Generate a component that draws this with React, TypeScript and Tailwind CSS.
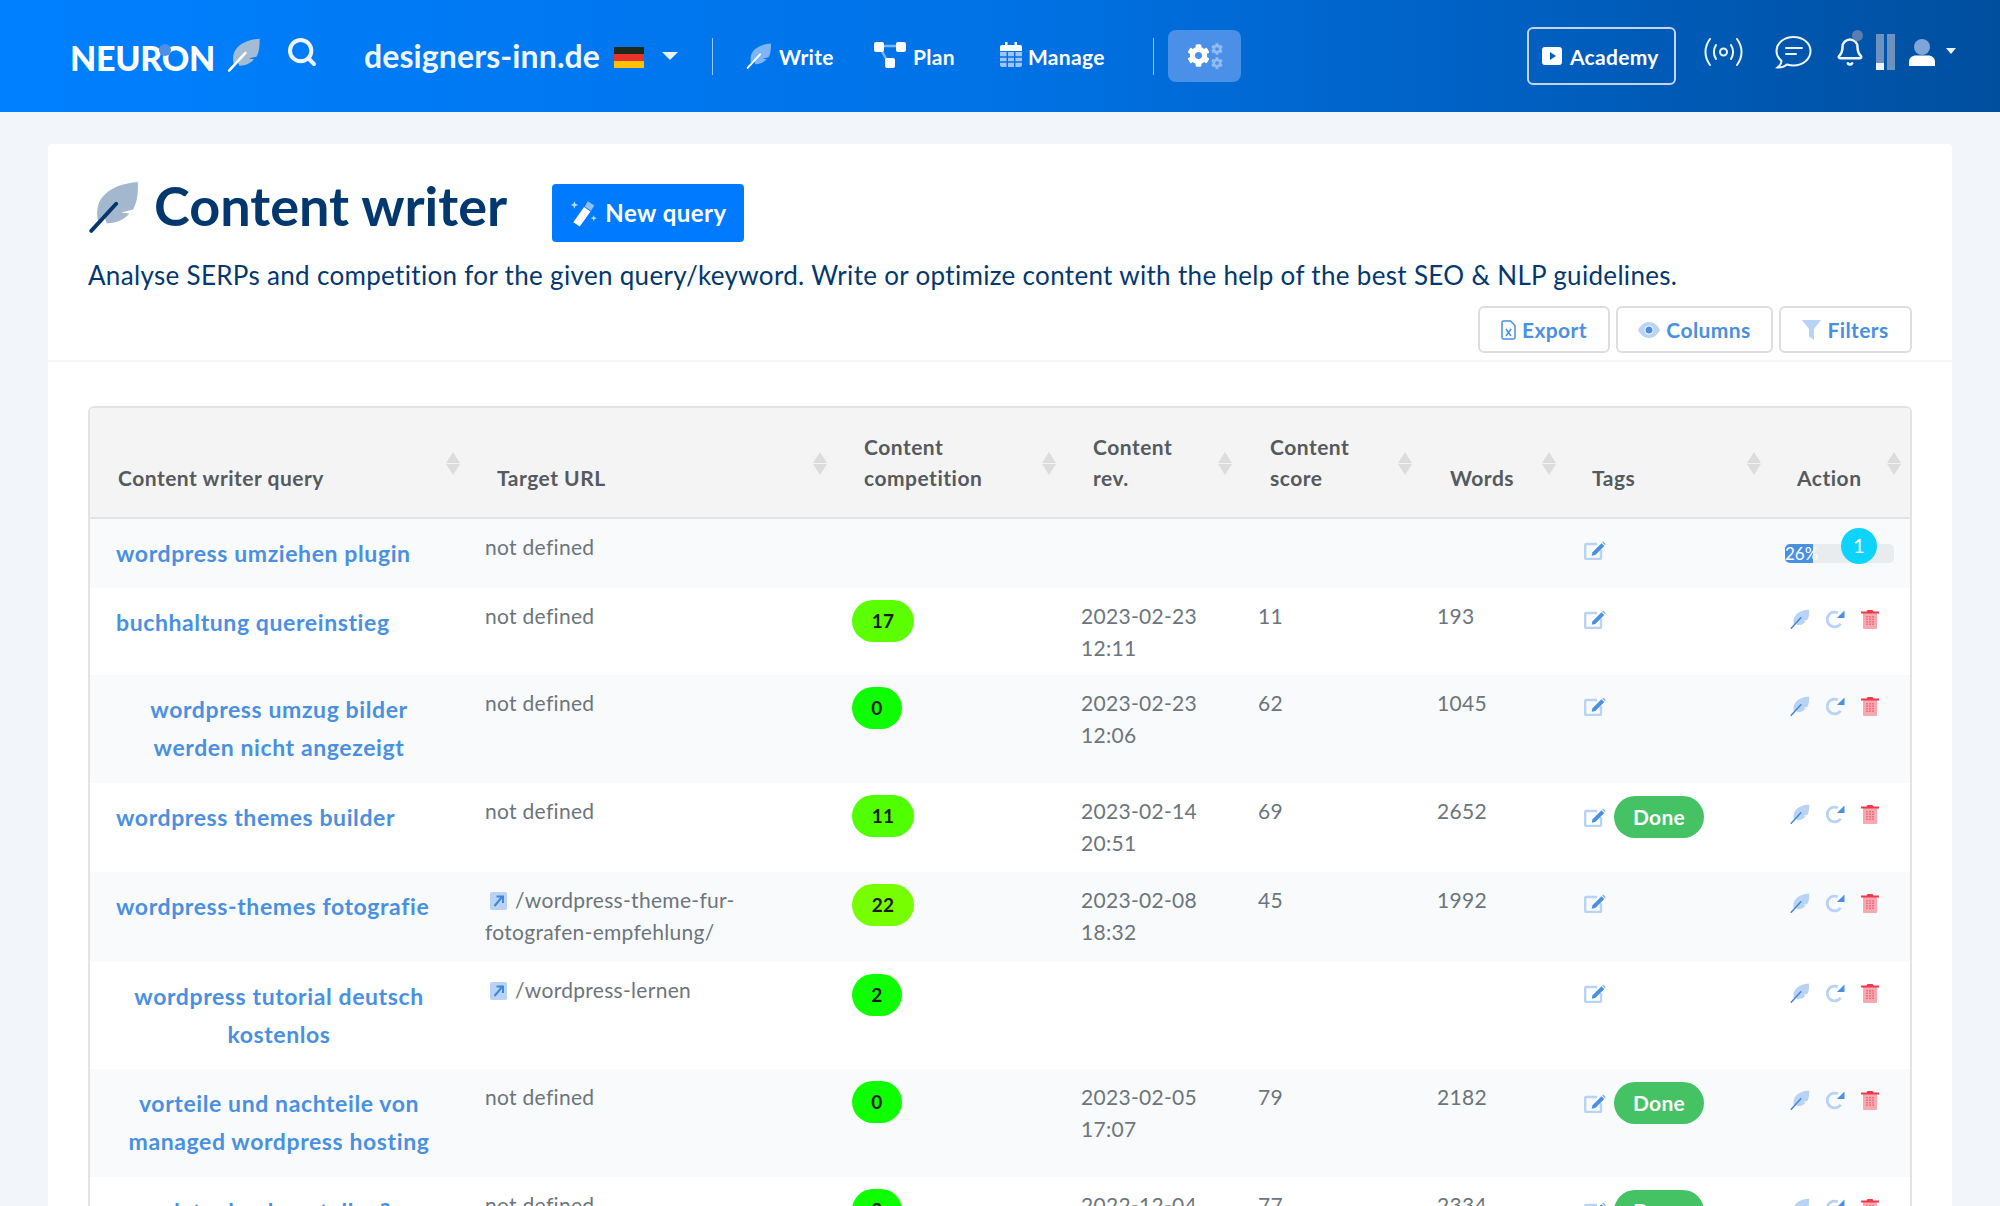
import React from 'react';
import { Search, Bell } from 'lucide-react';
import { FaCog } from 'react-icons/fa';

const FeatherIcon = ({ leaf, line, className }: { leaf: string; line: string; className: string }) => (
  <svg viewBox="0 0 24 24" className={className}>
    <path fill={leaf} d="M23.500.5C14 1 6 5 4.500 12c-.5 2.500-.3 5 .3 7l3-1.800.8 2.300c4 .2 8-1.500 10.500-4.500l-3.800-.5 5.500-1.300c1.700-3 2.500-7 2.200-13.200z" />
    <path stroke={line} strokeWidth="1.800" strokeLinecap="round" fill="none" d="M1.500 23 13 10.500" />
  </svg>
);

const EditIcon = () => (
  <svg viewBox="0 0 22 19" className="w-[22px] h-[19px] shrink-0">
    <path fill="none" stroke="#b9d3f5" strokeWidth="2.400" d="M13 3H2.200a1 1 0 0 0-1 1v13a1 1 0 0 0 1 1H16a1 1 0 0 0 1-1V9" />
    <path fill="#4a90e2" d="M17.500 2.200l2.800 2.800-9 9-3.600.8.8-3.600z" />
    <path fill="#7fb2ee" d="M18.500 1.200c.5-.5 1-.5 1.500 0l1.300 1.300c.4.5.4 1 0 1.500l-.3.3-2.800-2.800z" />
  </svg>
);

const RefreshIcon = () => (
  <svg viewBox="0 0 20 20" className="w-[19px] h-[20px] shrink-0">
    <path fill="none" stroke="#b9d3f5" strokeWidth="3" d="M15.500 15A7.800 7.800 0 1 1 12.500 3.500" />
    <path fill="#4a90e2" d="M19.500 1v8H11.500z" />
  </svg>
);

const TrashIcon = () => (
  <svg viewBox="0 0 18 20" className="w-[18px] h-[20px] shrink-0">
    <path fill="#f7a8b0" d="M2 4h14v15a1 1 0 0 1-1 1H3a1 1 0 0 1-1-1z" />
    <path fill="#ee3a4c" d="M0 2.500h5.500L6.500 1h5l1 1.500H18V4.500H0z" />
    <path stroke="#ee3a4c" strokeWidth="1" strokeDasharray="1.500 1" d="M6 7v10M9 7v10M12 7v10" />
  </svg>
);

const LinkIcon = () => (
  <svg viewBox="0 0 17 18" className="w-[17px] h-[18px] inline-block align-[-2px] mr-[8px] ml-[5px]">
    <rect width="17" height="18" rx="2" fill="#b9d3f5" />
    <path d="M4.500 14 12 5M6.500 4.500H13V11" fill="none" stroke="#3f86dc" strokeWidth="2" />
  </svg>
);

const SortArrows = ({ right }: { right: string }) => (
  <span className={`absolute top-[44px] flex flex-col gap-[1px] ${right}`}>
    <span className="w-0 h-0 border-x-[7px] border-x-transparent border-b-[11px] border-b-[#dcdcdc]" />
    <span className="w-0 h-0 border-x-[7px] border-x-transparent border-t-[11px] border-t-[#dcdcdc]" />
  </span>
);

const Separator = ({ ml }: { ml: string }) => <div className={`w-[1px] h-[37px] bg-white/60 ${ml}`} />;

const NavText = ({ w, children }: { w: string; children: React.ReactNode }) => (
  <span className={`${w} whitespace-nowrap text-[21px] leading-none font-bold text-white tracking-[0.3px]`}>{children}</span>
);

const Header = () => (
  <header className="h-[112px] bg-linear-to-r from-[#0080ff] via-[#0072e6] to-[#004f9f] flex items-center pl-[70px]">
    <div className="relative w-[147px] text-[34px] leading-none font-black text-white tracking-[-0.3px] mt-[3px]">
      NEURON
      <span className="absolute left-[89px] top-[3px] w-[12px] h-[12px] rounded-full bg-[#4a90e8]" />
    </div>
    <FeatherIcon leaf="#a3bcd6" line="#ffffff" className="w-[34px] h-[36px] ml-[10px] -mt-[2px]" />
    <Search size={32} strokeWidth={3} className="text-[#eef5fd] ml-[25px] -mt-[9px]" />
    <span className="w-[239px] whitespace-nowrap ml-[46px] text-[32px] leading-none font-bold text-[#eef5fd] tracking-[0.1px]">designers-inn.de</span>
    <svg viewBox="0 0 30 21" className="w-[30px] h-[21px] ml-[11px] mt-[3px]">
      <rect width="30" height="7" fill="#1f2a1a" />
      <rect y="7" width="30" height="7" fill="#e8332d" />
      <rect y="14" width="30" height="7" fill="#ffc107" />
    </svg>
    <span className="ml-[18px] -mt-[1px] w-0 h-0 border-x-[8px] border-x-transparent border-t-[8px] border-t-[#e8f1fb]" />
    <Separator ml="ml-[34px]" />
    <FeatherIcon leaf="#7db5f7" line="#ffffff" className="w-[26px] h-[32px] ml-[33px] -mt-[1px]" />
    <span className="ml-[7px] flex"><NavText w="w-[54px]">Write</NavText></span>
    <svg viewBox="0 0 32 26" className="w-[32px] h-[26px] ml-[41px] -mt-[3px]">
      <path d="M6 4h20M6 6l8 14" stroke="#7db5f7" strokeWidth="2.500" fill="none" />
      <rect x="0" y="0" width="10" height="10" rx="2" fill="#fff" />
      <rect x="22" y="0" width="10" height="10" rx="2" fill="#fff" />
      <rect x="11" y="16" width="10" height="10" rx="2" fill="#fff" />
    </svg>
    <span className="ml-[7px] flex"><NavText w="w-[44px]">Plan</NavText></span>
    <svg viewBox="0 0 22 25" className="w-[22px] h-[25px] ml-[43px] -mt-[3px]">
      <path fill="#fff" d="M0 5a2 2 0 0 1 2-2h18a2 2 0 0 1 2 2v4H0z" />
      <path fill="#fff" d="M5 0h2.500v5H5zM14.500 0H17v5h-2.500z" />
      <path fill="#9cc6f7" d="M0 10h22v13a2 2 0 0 1-2 2H2a2 2 0 0 1-2-2z" />
      <path stroke="#0a6fe0" strokeWidth="1.500" d="M7.300 10v15M14.700 10v15M0 15h22M0 20h22" />
    </svg>
    <span className="ml-[6px] flex"><NavText w="w-[79px]">Manage</NavText></span>
    <Separator ml="ml-[46px]" />
    <div className="ml-[14px] w-[73px] h-[52px] rounded-[8px] bg-[#4a90e8] flex items-center justify-center gap-[1px] -mt-[1px]">
      <FaCog size={23} className="text-white" />
      <div className="flex flex-col gap-[2px] text-[#8fbcf2]">
        <FaCog size={12} />
        <FaCog size={12} />
      </div>
    </div>
    <div className="ml-[286px] w-[149px] h-[58px] rounded-[6px] border-2 border-[#c5d5e8] flex items-center justify-center gap-[8px]">
      <svg viewBox="0 0 20 18" className="w-[20px] h-[18px]">
        <path fill="#fff" fillRule="evenodd" d="M3 0h14a3 3 0 0 1 3 3v12a3 3 0 0 1-3 3H3a3 3 0 0 1-3-3V3a3 3 0 0 1 3-3zm5 5v8l6-4z" />
      </svg>
      <NavText w="w-[91px]">Academy</NavText>
    </div>
    <svg viewBox="0 0 41 28" className="w-[41px] h-[28px] ml-[27px] -mt-[8px]" fill="none" stroke="#eef5fd" strokeWidth="2" strokeLinecap="round">
      <path d="M7 1C1 9 1 19 7 27M34 1c6 8 6 18 0 26M13 7c-3 5-3 9 0 14M28 7c3 5 3 9 0 14" />
      <circle cx="20.500" cy="14" r="3.500" />
    </svg>
    <svg viewBox="0 0 37 33" className="w-[37px] h-[33px] ml-[31px] -mt-[8px]" fill="none" stroke="#eef5fd" strokeWidth="2" strokeLinecap="round">
      <path d="M18.500 1C9 1 1.500 7 1.500 15c0 4 2 7.500 5 10-.3 2.500-2 5-4 6.500 3.500.2 7-1 9.500-3 2 .6 4.200 1 6.500 1 9.500 0 17-6.500 17-14.500S28 1 18.500 1z" />
      <path d="M11 12h16M11 18h10" />
    </svg>
    <div className="relative ml-[23px] -mt-[8px]">
      <Bell size={30} strokeWidth={2} className="text-[#eef5fd]" />
      <span className="absolute left-[17px] -top-[7px] w-[11px] h-[11px] rounded-full bg-[#5a7fae]" />
    </div>
    <div className="ml-[11px] -mt-[8px] flex gap-[3px]">
      <div className="w-[8px] h-[36px] bg-[#6d92bf] flex items-end"><div className="w-full h-[7px] bg-[#eef2f6]" /></div>
      <div className="w-[8px] h-[36px] bg-[#6d92bf]" />
    </div>
    <svg viewBox="0 0 26 27" className="w-[26px] h-[27px] ml-[14px] -mt-[8px]">
      <circle cx="13" cy="8" r="8" fill="#7ea6d8" />
      <path fill="#fff" d="M0 27v-4c0-4 3-6.500 7-6.500h12c4 0 7 2.500 7 6.500v4z" />
    </svg>
    <span className="ml-[11px] -mt-[10px] w-0 h-0 border-x-[5px] border-x-transparent border-t-[6px] border-t-[#eef5fd]" />
  </header>
);

type Row = {
  h: string;
  query: string[];
  center?: boolean;
  target: string | string[];
  link?: boolean;
  badge?: string;
  badgeBg?: string;
  rev?: string[];
  score?: string;
  words?: string;
  done?: boolean;
  progress?: boolean;
};

const rows: Row[] = [
  { h: 'h-[70px]', query: ['wordpress umziehen plugin'], target: 'not defined', progress: true },
  { h: 'h-[87px]', query: ['buchhaltung quereinstieg'], target: 'not defined', badge: '17', badgeBg: 'bg-[#5cff00] w-[62px]', rev: ['2023-02-23', '12:11'], score: '11', words: '193' },
  { h: 'h-[108px]', query: ['wordpress umzug bilder', 'werden nicht angezeigt'], center: true, target: 'not defined', badge: '0', badgeBg: 'bg-[#0eff00] w-[50px]', rev: ['2023-02-23', '12:06'], score: '62', words: '1045' },
  { h: 'h-[89px]', query: ['wordpress themes builder'], target: 'not defined', badge: '11', badgeBg: 'bg-[#50ff00] w-[62px]', rev: ['2023-02-14', '20:51'], score: '69', words: '2652', done: true },
  { h: 'h-[90px]', query: ['wordpress-themes fotografie'], target: ['/wordpress-theme-fur-', 'fotografen-empfehlung/'], link: true, badge: '22', badgeBg: 'bg-[#77ff00] w-[62px]', rev: ['2023-02-08', '18:32'], score: '45', words: '1992' },
  { h: 'h-[107px]', query: ['wordpress tutorial deutsch', 'kostenlos'], center: true, target: ['/wordpress-lernen'], link: true, badge: '2', badgeBg: 'bg-[#0eff00] w-[50px]' },
  { h: 'h-[108px]', query: ['vorteile und nachteile von', 'managed wordpress hosting'], center: true, target: 'not defined', badge: '0', badgeBg: 'bg-[#0eff00] w-[50px]', rev: ['2023-02-05', '17:07'], score: '79', words: '2182', done: true },
  { h: 'h-[108px]', query: ['datenbank erstellen?', ''], center: true, target: 'not defined', badge: '3', badgeBg: 'bg-[#0eff00] w-[50px]', rev: ['2022-12-04', '10:15'], score: '77', words: '2334', done: true },
];

const columns = [
  { label: ['Content writer query'], pl: 'pl-[28px]', sort: 'right-[13px]' },
  { label: ['Target URL'], pl: 'pl-[24px]', sort: 'right-[13px]' },
  { label: ['Content', 'competition'], pl: 'pl-[24px]', sort: 'right-[13px]' },
  { label: ['Content', 'rev.'], pl: 'pl-[24px]', sort: 'right-[14px]' },
  { label: ['Content', 'score'], pl: 'pl-[24px]', sort: 'right-[13px]' },
  { label: ['Words'], pl: 'pl-[25px]', sort: 'right-[16px]' },
  { label: ['Tags'], pl: 'pl-[20px]', sort: 'right-[14px]' },
  { label: ['Action'], pl: 'pl-[22px]', sort: 'right-[9px]' },
];

const DataTable = () => (
  <div className="mt-[44px] ml-[40px] w-[1824px] border-x-2 border-t-2 border-[#e3e3e3] rounded-t-[6px] overflow-hidden">
    <table className="w-[1820px] table-fixed border-collapse">
      <colgroup>
        <col className="w-[383px]" />
        <col className="w-[367px]" />
        <col className="w-[229px]" />
        <col className="w-[177px]" />
        <col className="w-[179px]" />
        <col className="w-[147px]" />
        <col className="w-[203px]" />
        <col className="w-[135px]" />
      </colgroup>
      <thead>
        <tr className="h-[110px] bg-[#f4f4f5] border-b-2 border-[#e3e3e3]">
          {columns.map((c) => (
            <th key={c.label.join()} className={`relative align-bottom text-left pb-[24px] ${c.pl} text-[21px] leading-[31px] font-bold tracking-[0.5px] text-[#555a5f]`}>
              {c.label.map((l) => <div key={l}>{l}</div>)}
              <SortArrows right={c.sort} />
            </th>
          ))}
        </tr>
      </thead>
      <tbody className="text-[21px] leading-[32px] tracking-[0.3px] text-[#6c757d]">
        {rows.map((r, i) => (
          <tr key={i} className={`${r.h} align-top ${i % 2 === 0 ? 'bg-[#f9fafb]' : 'bg-white'}`}>
            <td className="pl-[26px] pt-[15px]">
              <div className={`text-[23px] leading-[38px] font-bold tracking-[0.6px] text-[#4a90e2] ${r.center ? 'w-[326px] text-center' : ''}`}>
                {r.query.map((q) => <div key={q}>{q}</div>)}
              </div>
            </td>
            <td className="pl-[12px] pt-[12px]">
              {r.link && <LinkIcon />}
              {Array.isArray(r.target) ? (
                <>
                  {r.target[0]}
                  {r.target[1] && <div>{r.target[1]}</div>}
                </>
              ) : r.target}
            </td>
            <td className="pl-[12px] pt-[12px]">
              {r.badge && (
                <div className={`h-[42px] rounded-[21px] flex items-center justify-center text-[19px] font-bold text-[#1a1a1a] ${r.badgeBg}`}>{r.badge}</div>
              )}
            </td>
            <td className="pl-[12px] pt-[12px]">{r.rev?.map((l) => <div key={l}>{l}</div>)}</td>
            <td className="pl-[12px] pt-[12px]">{r.score}</td>
            <td className="pl-[12px] pt-[12px]">{r.words}</td>
            <td className={`pl-[12px] ${r.done ? 'pt-[13px]' : 'pt-[10px]'}`}>
              <div className="flex items-center gap-[8px] min-h-[42px]">
                <EditIcon />
                {r.done && (
                  <span className="w-[90px] h-[42px] rounded-[21px] bg-[#45c264] text-white font-bold flex items-center justify-center">Done</span>
                )}
              </div>
            </td>
            <td className={r.progress ? 'pl-[10px] pt-[25px]' : 'pl-[15px] pt-[21px]'}>
              {r.progress ? (
                <div className="relative w-[109px] h-[19px] rounded-[5px] bg-[#e9ecef]">
                  <div className="w-[28px] h-full rounded-l-[5px] bg-[#4a90e2] text-white text-[17px] leading-[19px] tracking-normal whitespace-nowrap">26%</div>
                  <span className="absolute left-[56px] -top-[16px] w-[36px] h-[36px] rounded-full bg-[#0dd3ff] text-white text-[20px] leading-[34px] text-center">1</span>
                </div>
              ) : (
                <div className="flex items-start gap-[16px]">
                  <FeatherIcon leaf="#b9d3f5" line="#3f86dc" className="w-[20px] h-[20px] shrink-0" />
                  <RefreshIcon />
                  <TrashIcon />
                </div>
              )}
            </td>
          </tr>
        ))}
      </tbody>
    </table>
  </div>
);

const ToolButton = ({ w, icon, label }: { w: string; icon: React.ReactNode; label: string }) => (
  <button className={`${w} h-[47px] rounded-[6px] border-2 border-[#dedede] flex items-center justify-center gap-[6px] text-[21px] font-bold tracking-[0.4px] text-[#4a90e2]`}>
    {icon}
    {label}
  </button>
);

export default function App() {
  return (
    <div className="h-[1206px] overflow-hidden bg-[#f2f5f9] font-[Lato,sans-serif]">
      <Header />
      <main className="mt-[32px] ml-[48px] w-[1904px] h-[1100px] bg-white rounded-t-[4px]">
        <div className="h-[218px] border-b-2 border-[#f6f6f6] pl-[40px] relative">
          <div className="flex items-start pt-[37px]">
            <FeatherIcon leaf="#a3b8cf" line="#03386f" className="w-[52px] h-[52px]" />
            <h1 className="w-[352px] whitespace-nowrap ml-[14px] -mt-[3px] text-[54px] leading-[56px] font-bold text-[#03386f]">Content writer</h1>
            <button className="ml-[46px] mt-[3px] w-[192px] h-[58px] rounded-[4px] bg-[#007bff] flex items-center justify-center gap-[8px] text-[24px] font-bold text-white tracking-[0.5px]">
              <svg viewBox="0 0 26 26" className="w-[28px] h-[28px]">
                <path fill="#fff" d="M14 7.500l6 4L10 25.500l-6-4z" />
                <path fill="#8fc0fb" d="M17.500 2l6 4-3 5-6-4z" />
                <path fill="#bcd9fc" d="M5 2l1 2.500L8.500 5.500 6 6.500 5 9 4 6.500 1.500 5.500 4 4.500zM23 15l.8 2 2 .8-2 .8-.8 2-.8-2-2-.8 2-.8z" />
              </svg>
              New query
            </button>
          </div>
          <p className="mt-[16px] text-[26px] leading-[34px] tracking-[0.32px] text-[#03386f] whitespace-nowrap">Analyse SERPs and competition for the given query/keyword. Write or optimize content with the help of the best SEO &amp; NLP guidelines.</p>
          <div className="absolute left-[1430px] top-[162px] flex gap-[6px]">
            <ToolButton
              w="w-[132px]"
              label="Export"
              icon={
                <svg viewBox="0 0 15 20" className="w-[15px] h-[20px]" fill="none" stroke="#4a90e2" strokeWidth="1.500">
                  <path d="M1 2.500a1.500 1.500 0 0 1 1.500-1.500H9.500L14 5.500V17.500a1.500 1.500 0 0 1-1.500 1.500h-10A1.500 1.500 0 0 1 1 17.500z" />
                  <path d="M5 9l5 7M10 9l-5 7" />
                </svg>
              }
            />
            <ToolButton
              w="w-[157px]"
              label="Columns"
              icon={
                <svg viewBox="0 0 22 16" className="w-[22px] h-[16px]">
                  <path fill="#b9d3f5" d="M0 8c2.500-5 6.500-8 11-8s8.500 3 11 8c-2.500 5-6.500 8-11 8S2.500 13 0 8z" />
                  <circle cx="11" cy="8" r="4.500" fill="#fff" />
                  <circle cx="11" cy="8" r="3.500" fill="#4a90e2" />
                </svg>
              }
            />
            <ToolButton
              w="w-[133px]"
              label="Filters"
              icon={
                <svg viewBox="0 0 19 20" className="w-[19px] h-[20px]">
                  <path fill="#b9d3f5" d="M0 0h19l-7 9v11l-5-3.500V9z" />
                </svg>
              }
            />
          </div>
        </div>
        <DataTable />
      </main>
    </div>
  );
}
